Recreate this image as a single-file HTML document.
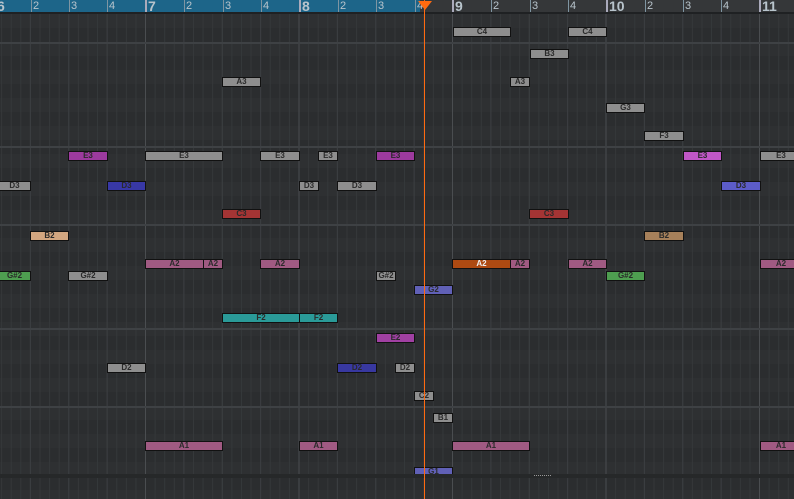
<!DOCTYPE html>
<html><head><style>
body{margin:0;width:794px;height:499px;overflow:hidden;background:#2d2f31;font-family:"Liberation Sans",sans-serif;position:relative}
#grid{position:absolute;left:0;top:14px;width:794px;height:485px;
background:
linear-gradient(90deg,transparent 152.5px,#4a4d50 152.5px,#4a4d50 154px,transparent 154px) -7.5px 0/153.5px 100% repeat-x,
linear-gradient(90deg,transparent 37.4px,#3b3e41 37.4px,#3b3e41 38.4px) -7.5px 0/38.375px 100% repeat-x,
linear-gradient(90deg,transparent 8.6px,#35383a 8.6px,#35383a 9.6px) -7.5px 0/9.594px 100% repeat-x,
repeating-linear-gradient(180deg,#2e3032 0,#2e3032 14px,#2b2d2f 14px,#2b2d2f 28px);}
.h{position:absolute;left:0;width:794px;height:2px;background:#3e4144}
#ruler{position:absolute;left:0;top:0;width:794px;height:12px;background:#353739}
#blue{position:absolute;left:0;top:0;width:420px;height:12px;background:#1d6589}
#rl{position:absolute;left:0;top:12px;width:794px;height:2px;background:#1f2123}
.t{position:absolute;top:0;height:12px;border-left:1px solid #7f95a2;color:#b8c4cc;font-size:11px;line-height:12px;padding-left:1px}
.b{font-size:14px;font-weight:bold;border-left:2px solid #aab}
.n{position:absolute;height:8px;border:1px solid #111;font-size:8px;font-weight:bold;line-height:8px;text-align:center;color:#2a2a2a;box-sizing:content-box;overflow:hidden;white-space:nowrap}
.g{background:#8e8e8e}
#ph{position:absolute;left:424px;top:0;width:1px;height:499px;background:#ff6a10}
#tri{position:absolute;left:418px;top:1px;width:0;height:0;border-left:7px solid transparent;border-right:7px solid transparent;border-top:9px solid #ff6a10}
#bot{position:absolute;left:0;top:474px;width:794px;height:4px;background:#262829}
</style></head><body>
<div id="grid"></div>
<div class="h" style="top:42px"></div><div class="h" style="top:146px"></div><div class="h" style="top:224px"></div><div class="h" style="top:328px"></div><div class="h" style="top:406px"></div>
<div id="ruler"></div><div id="blue"></div><div id="rl"></div>
<div class="t b" style="left:-6px">6</div>
<div class="t" style="left:31px">2</div><div class="t" style="left:69px">3</div><div class="t" style="left:107px">4</div>
<div class="t b" style="left:145px">7</div>
<div class="t" style="left:184px">2</div><div class="t" style="left:223px">3</div><div class="t" style="left:261px">4</div>
<div class="t b" style="left:299px">8</div>
<div class="t" style="left:338px">2</div><div class="t" style="left:376px">3</div><div class="t" style="left:415px">4</div>
<div class="t b" style="left:452px">9</div>
<div class="t" style="left:491px">2</div><div class="t" style="left:530px">3</div><div class="t" style="left:568px">4</div>
<div class="t b" style="left:606px">10</div>
<div class="t" style="left:645px">2</div><div class="t" style="left:683px">3</div><div class="t" style="left:721px">4</div>
<div class="t b" style="left:759px">11</div>

<div class="n g" style="left:453px;top:27px;width:56px">C4</div>
<div class="n g" style="left:568px;top:27px;width:37px">C4</div>
<div class="n g" style="left:530px;top:49px;width:37px">B3</div>
<div class="n g" style="left:222px;top:77px;width:37px">A3</div>
<div class="n g" style="left:510px;top:77px;width:18px">A3</div>
<div class="n g" style="left:606px;top:103px;width:37px">G3</div>
<div class="n g" style="left:644px;top:131px;width:38px">F3</div>
<div class="n" style="left:68px;top:151px;width:38px;background:#9c3a9e">E3</div>
<div class="n g" style="left:145px;top:151px;width:76px">E3</div>
<div class="n g" style="left:260px;top:151px;width:38px">E3</div>
<div class="n g" style="left:318px;top:151px;width:18px">E3</div>
<div class="n" style="left:376px;top:151px;width:37px;background:#9c3a9e">E3</div>
<div class="n" style="left:683px;top:151px;width:37px;background:#c057c6">E3</div>
<div class="n g" style="left:760px;top:151px;width:40px">E3</div>
<div class="n g" style="left:-2px;top:181px;width:31px">D3</div>
<div class="n" style="left:107px;top:181px;width:37px;background:#3838a6">D3</div>
<div class="n g" style="left:299px;top:181px;width:18px">D3</div>
<div class="n g" style="left:337px;top:181px;width:38px">D3</div>
<div class="n" style="left:721px;top:181px;width:38px;background:#5c5cc8">D3</div>
<div class="n" style="left:222px;top:209px;width:37px;background:#a43434">C3</div>
<div class="n" style="left:529px;top:209px;width:38px;background:#a43434">C3</div>
<div class="n" style="left:30px;top:231px;width:37px;background:#d2a680">B2</div>
<div class="n" style="left:644px;top:231px;width:38px;background:#a6805a">B2</div>
<div class="n" style="left:145px;top:259px;width:57px;background:#a05a82">A2</div>
<div class="n" style="left:203px;top:259px;width:18px;background:#a05a82">A2</div>
<div class="n" style="left:260px;top:259px;width:38px;background:#a05a82">A2</div>
<div class="n" style="left:452px;top:259px;width:57px;background:#ae4a12;color:#eee">A2</div>
<div class="n" style="left:510px;top:259px;width:18px;background:#a05a82">A2</div>
<div class="n" style="left:568px;top:259px;width:37px;background:#a05a82">A2</div>
<div class="n" style="left:760px;top:259px;width:40px;background:#a05a82">A2</div>
<div class="n" style="left:-2px;top:271px;width:31px;background:#4e9e50">G#2</div>
<div class="n g" style="left:68px;top:271px;width:38px">G#2</div>
<div class="n g" style="left:376px;top:271px;width:18px">G#2</div>
<div class="n" style="left:606px;top:271px;width:37px;background:#4e9e50">G#2</div>
<div class="n" style="left:414px;top:285px;width:37px;background:#6060b6">G2</div>
<div class="n" style="left:222px;top:313px;width:76px;background:#2a9a98">F2</div>
<div class="n" style="left:299px;top:313px;width:37px;background:#2a9a98">F2</div>
<div class="n" style="left:376px;top:333px;width:37px;background:#a040a2">E2</div>
<div class="n g" style="left:107px;top:363px;width:37px">D2</div>
<div class="n" style="left:337px;top:363px;width:38px;background:#3838a0">D2</div>
<div class="n g" style="left:395px;top:363px;width:18px">D2</div>
<div class="n g" style="left:414px;top:391px;width:18px">C2</div>
<div class="n g" style="left:433px;top:413px;width:18px">B1</div>
<div class="n" style="left:145px;top:441px;width:76px;background:#a05a82">A1</div>
<div class="n" style="left:299px;top:441px;width:37px;background:#a05a82">A1</div>
<div class="n" style="left:452px;top:441px;width:76px;background:#a05a82">A1</div>
<div class="n" style="left:760px;top:441px;width:40px;background:#a05a82">A1</div>
<div class="n" style="left:414px;top:467px;width:37px;background:#6060b6">G1</div>
<div id="bot"></div>
<div style="position:absolute;left:534px;top:475px;width:17px;height:1px;border-top:1px dotted #999"></div>
<div id="ph"></div><div id="tri"></div>
</body></html>
